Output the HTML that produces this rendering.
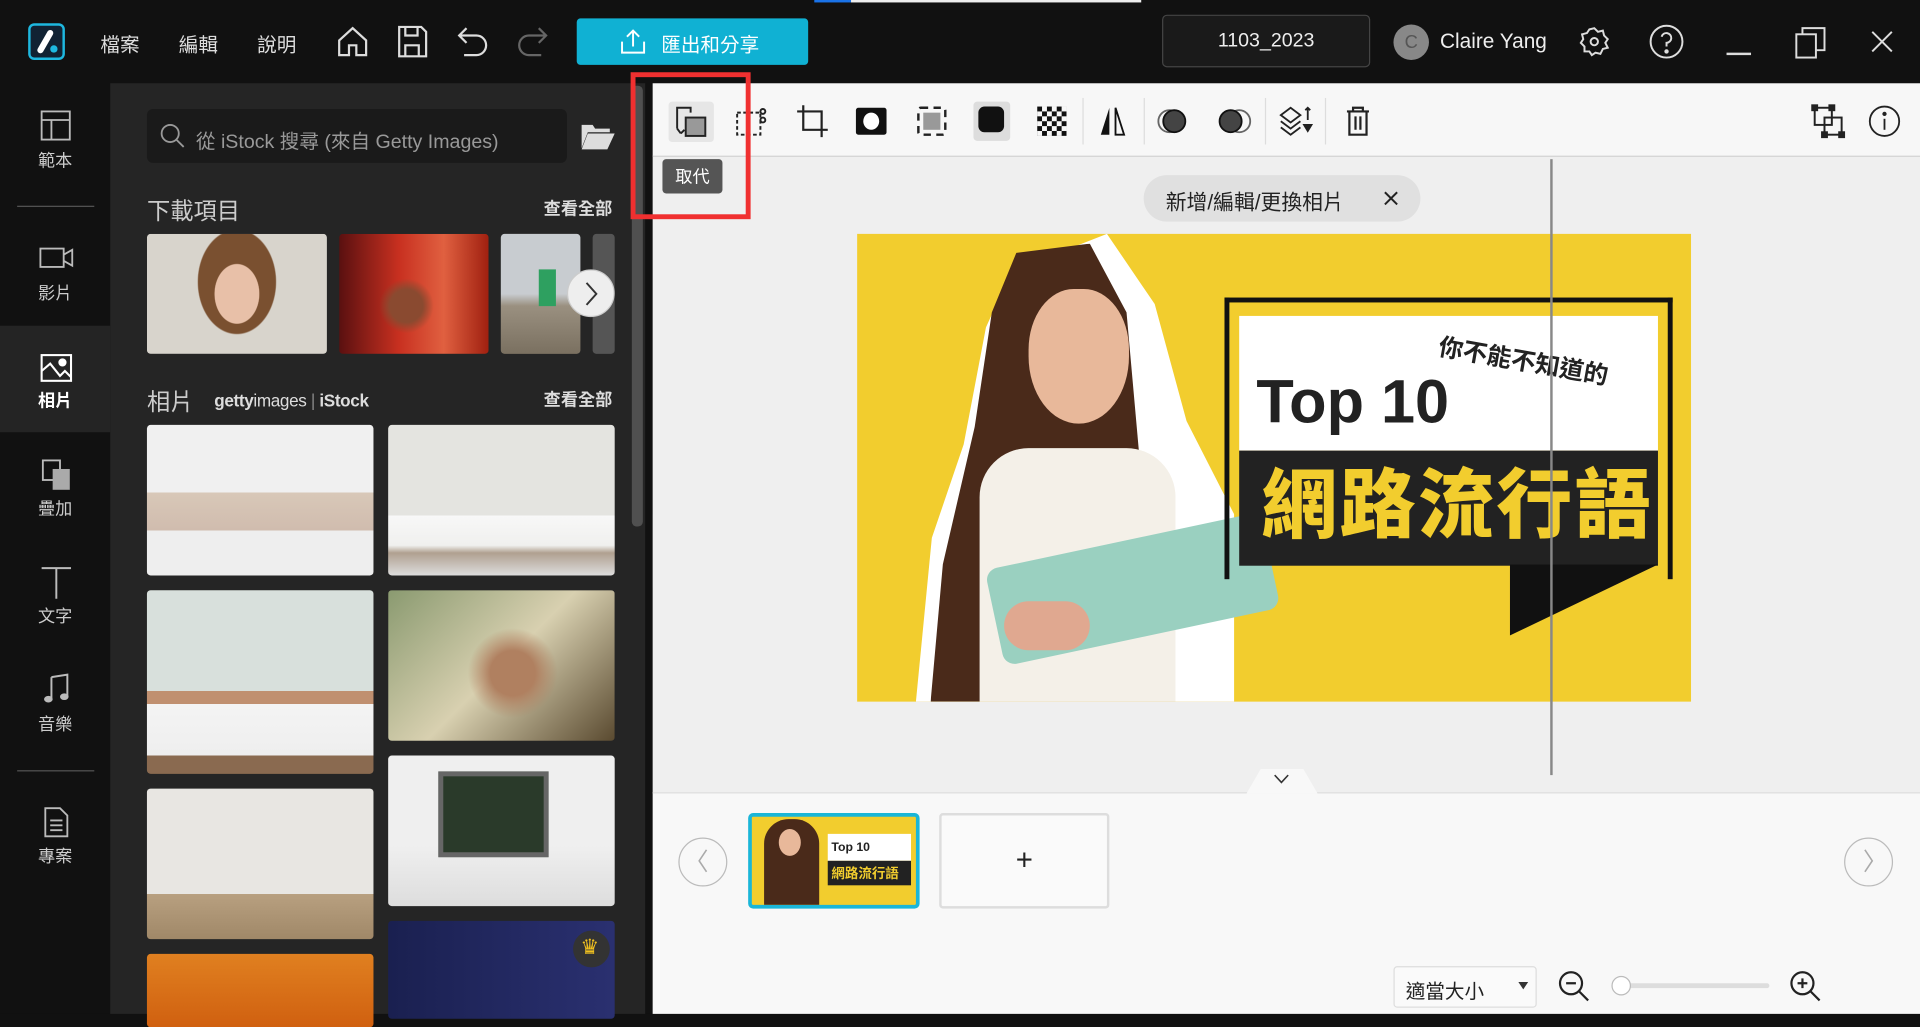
<!DOCTYPE html>
<html><head><meta charset="utf-8"><style>
*{margin:0;padding:0;box-sizing:border-box}
html,body{width:1920px;height:1014px;overflow:hidden;background:#111}
#w{position:absolute;left:0;top:0;width:1568px;height:828px;transform:scale(1.22449);transform-origin:0 0;font-family:"Liberation Sans","Noto Sans CJK TC",sans-serif;background:#111}
.a{position:absolute}
.t{color:#ddd;font-size:16px}
svg{position:absolute;overflow:visible}
.ph{position:absolute;border-radius:3px;overflow:hidden}
.nav{position:absolute;left:0;width:90px;text-align:center;color:#ccc;font-size:14px}
</style></head><body><div id="w">
<!-- top bar -->
<div class="a" style="left:665px;top:0;width:30px;height:2px;background:#1a73e8"></div>
<div class="a" style="left:695px;top:0;width:237px;height:2px;background:#eee"></div>
<div class="a" style="left:23px;top:19px;width:30px;height:30px;border:2px solid #1eb8e0;border-radius:5px;background:#123"></div>
<svg style="left:23px;top:19px" width="30" height="30"><path d="M10 22 L18 8" stroke="#fff" stroke-width="5" stroke-linecap="round"/><circle cx="21" cy="21" r="3" fill="#1eb8e0"/></svg>
<div class="a t" style="left:82px;top:23px">檔案</div>
<div class="a t" style="left:146px;top:23px">編輯</div>
<div class="a t" style="left:210px;top:23px">說明</div>
<svg style="left:275px;top:21px" width="26" height="26" fill="none" stroke="#ddd" stroke-width="1.8"><path d="M2 12 L13 2 L24 12 V24 H16 V16 H10 V24 H2 Z"/></svg>
<svg style="left:325px;top:21px" width="24" height="26" fill="none" stroke="#ddd" stroke-width="1.8"><path d="M1 1 H19 L23 5 V25 H1 Z M6 1 V8 H16 V1 M6 25 V16 H17 V25"/></svg>
<svg style="left:373px;top:22px" width="26" height="24" fill="none" stroke="#ddd" stroke-width="1.8"><path d="M8 1 L2 7 L8 13 M2 7 H16 A8 8 0 0 1 16 23 H6"/></svg>
<svg style="left:422px;top:22px" width="26" height="24" fill="none" stroke="#666" stroke-width="1.8"><path d="M18 1 L24 7 L18 13 M24 7 H10 A8 8 0 0 0 10 23 H20"/></svg>
<div class="a" style="left:471px;top:15px;width:189px;height:38px;background:#10b1d3;border-radius:3px"></div>
<svg style="left:507px;top:24px" width="20" height="20" fill="none" stroke="#fff" stroke-width="1.6"><path d="M10 14 V1 M5 6 L10 1 L15 6 M1 10 V19 H19 V10"/></svg>
<div class="a" style="left:540px;top:23px;color:#fff;font-size:16px">匯出和分享</div>
<div class="a" style="left:949px;top:12px;width:170px;height:43px;background:#1a1a1a;border:1px solid #444;border-radius:4px;color:#eee;font-size:16px;text-align:center;line-height:41px">1103_2023</div>
<div class="a" style="left:1138px;top:20px;width:29px;height:29px;border-radius:50%;background:#888;color:#555;text-align:center;line-height:29px;font-size:15px">C</div>
<div class="a t" style="left:1176px;top:24px;color:#eee;font-size:17px">Claire Yang</div>
<svg style="left:1290px;top:22px" width="24" height="24" fill="none" stroke="#ddd" stroke-width="1.6"><path d="M12 1 L15 4 L19 3 L20 7 L23 10 L21 13 L23 17 L19 18 L17 22 L13 21 L10 23 L8 20 L4 20 L4 16 L1 13 L3 10 L2 6 L6 5 L8 2 Z"/><circle cx="12" cy="12" r="3"/></svg>
<svg style="left:1347px;top:20px" width="28" height="28" fill="none" stroke="#ddd" stroke-width="1.6"><circle cx="14" cy="14" r="13"/><path d="M10 10 A4 4 0 1 1 14 15 V18"/><circle cx="14" cy="22" r="1" fill="#ddd"/></svg>
<div class="a" style="left:1410px;top:43px;width:20px;height:2px;background:#ddd"></div>
<svg style="left:1466px;top:22px" width="26" height="26" fill="none" stroke="#ddd" stroke-width="1.6"><rect x="1" y="6" width="16" height="19"/><path d="M6 6 V1 H24 V19 H17"/></svg>
<svg style="left:1528px;top:25px" width="18" height="18" stroke="#ddd" stroke-width="1.6"><path d="M1 1 L17 17 M17 1 L1 17"/></svg>

<!-- left rail -->
<div class="a" style="left:0;top:68px;width:90px;height:760px;background:#111"></div>
<div class="a" style="left:0;top:266px;width:90px;height:87px;background:#242424"></div>
<div class="a" style="left:14px;top:168px;width:63px;height:1px;background:#555"></div>
<div class="a" style="left:14px;top:629px;width:63px;height:1px;background:#555"></div>
<svg style="left:33px;top:90px" width="25" height="25" fill="none" stroke="#bbb" stroke-width="1.5"><rect x="1" y="1" width="23" height="23"/><path d="M1 8 H24 M9 8 V24"/></svg>
<div class="nav" style="top:121px">範本</div>
<svg style="left:32px;top:202px" width="28" height="18" fill="none" stroke="#bbb" stroke-width="1.5"><rect x="1" y="1" width="19" height="15"/><path d="M20 6 L27 2 V15 L20 11"/></svg>
<div class="nav" style="top:229px">影片</div>
<svg style="left:33px;top:289px" width="26" height="23" fill="none" stroke="#fff" stroke-width="1.7"><rect x="1" y="1" width="24" height="21"/><path d="M1 14 L8 8 L16 18 L20 14 L25 19"/><circle cx="18" cy="7" r="2.5" fill="#fff"/></svg>
<div class="nav" style="top:317px;color:#fff;font-weight:bold">相片</div>
<svg style="left:34px;top:375px" width="24" height="26"><rect x="1" y="1" width="14" height="16" fill="none" stroke="#bbb" stroke-width="1.5"/><rect x="9" y="8" width="14" height="17" fill="#aaa"/></svg>
<div class="nav" style="top:405px">疊加</div>
<svg style="left:33px;top:462px" width="26" height="28" stroke="#bbb" stroke-width="1.6"><path d="M1 2 H25 M13 2 V27"/></svg>
<div class="nav" style="top:493px">文字</div>
<svg style="left:35px;top:550px" width="22" height="26" fill="#bbb"><path d="M7 3 L20 1 V19" stroke="#bbb" stroke-width="1.6" fill="none"/><path d="M7 3 V21" stroke="#bbb" stroke-width="1.6"/><ellipse cx="4.5" cy="21" rx="3.5" ry="2.7"/><ellipse cx="17.5" cy="19" rx="3.5" ry="2.7"/></svg>
<div class="nav" style="top:581px">音樂</div>
<svg style="left:36px;top:659px" width="20" height="25" fill="none" stroke="#bbb" stroke-width="1.5"><path d="M1 1 H13 L19 7 V24 H1 Z M5 11 H15 M5 15 H15 M5 19 H15"/></svg>
<div class="nav" style="top:689px">專案</div>

<!-- panel -->
<div class="a" style="left:90px;top:68px;width:437px;height:760px;background:#252525"></div>
<div class="a" style="left:120px;top:89px;width:343px;height:44px;background:#1a1a1a;border-radius:5px"></div>
<svg style="left:131px;top:101px" width="20" height="20" fill="none" stroke="#999" stroke-width="1.5"><circle cx="8" cy="8" r="7"/><path d="M13 13 L19 19"/></svg>
<div class="a" style="left:160px;top:102px;color:#999;font-size:16px">從 iStock 搜尋 (來自 Getty Images)</div>
<svg style="left:474px;top:99px" width="28" height="24"><path d="M1 3 H10 L12 6 H24 V9 H6 L1 22 Z" fill="#ddd"/><path d="M6 10 H28 L22 23 H1 Z" fill="#ddd"/></svg>
<div class="a" style="left:120px;top:158px;color:#ccc;font-size:19px">下載項目</div>
<div class="a" style="left:444px;top:160px;color:#ddd;font-size:14px;font-weight:bold">查看全部</div>
<div class="ph" style="left:120px;top:191px;width:147px;height:98px;background:radial-gradient(ellipse 30px 40px at 50% 50%,#e8c0a8 60%,transparent 62%),radial-gradient(ellipse 45px 60px at 50% 40%,#7a5030 70%,transparent 72%),#d8d4cc"></div>
<div class="ph" style="left:277px;top:191px;width:122px;height:98px;background:radial-gradient(circle at 45% 60%,#8a4a30 15%,transparent 25%),linear-gradient(90deg,#5a1010,#c83020 40%,#e06040 70%,#a02010)"></div>
<div class="ph" style="left:409px;top:191px;width:65px;height:98px;background:linear-gradient(#c8ccd0 50%,#9a9080 60%,#7a7060);"></div>
<div class="a" style="left:440px;top:220px;width:14px;height:30px;background:#2ea060"></div>
<div class="ph" style="left:484px;top:191px;width:18px;height:98px;background:#555"></div>
<div class="a" style="left:463px;top:220px;width:39px;height:39px;border-radius:50%;background:#eee;border:1px solid #ccc"></div>
<svg style="left:477px;top:230px" width="12" height="20" fill="none" stroke="#333" stroke-width="1.6"><path d="M2 1 L10 10 L2 19"/></svg>
<div class="a" style="left:120px;top:314px;color:#ccc;font-size:19px">相片</div>
<div class="a" style="left:175px;top:319px;color:#ddd;font-size:14px;font-weight:bold;letter-spacing:-0.3px">getty<span style="font-weight:normal">images</span> <span style="color:#888;font-weight:normal">|</span> iStock</div>
<div class="a" style="left:444px;top:316px;color:#ddd;font-size:14px;font-weight:bold">查看全部</div>
<div class="ph" style="left:120px;top:347px;width:185px;height:123px;background:linear-gradient(#f0f0f0 45%,#d8c8b8 45%,#d0bcae 70%,#eee 70%)"></div>
<div class="ph" style="left:317px;top:347px;width:185px;height:123px;background:linear-gradient(#e4e4e0 60%,#f8f8f8 60%,#f0f0ee 80%,#b0a090 85%,#ddd)"></div>
<div class="ph" style="left:120px;top:482px;width:185px;height:150px;background:linear-gradient(#d8e0dc 55%,#c09070 55%,#c09070 62%,#f4f4f4 62%,#eee 90%,#8a6a50 90%)"></div>
<div class="ph" style="left:317px;top:482px;width:185px;height:123px;background:radial-gradient(circle at 55% 55%,#b08060 15%,transparent 30%),linear-gradient(135deg,#8a9a70,#d8d0b0 50%,#5a4a30)"></div>
<div class="ph" style="left:120px;top:644px;width:185px;height:123px;background:linear-gradient(#e8e6e2 70%,#b8a080 70%,#a08868)"></div>
<div class="ph" style="left:317px;top:617px;width:185px;height:123px;background:linear-gradient(#efefef 60%,#ddd)"></div>
<div class="a" style="left:358px;top:630px;width:90px;height:70px;background:#2a3a2a;border:4px solid #666"></div>
<div class="ph" style="left:120px;top:779px;width:185px;height:60px;background:linear-gradient(#e08020,#d06010)"></div>
<div class="ph" style="left:317px;top:752px;width:185px;height:80px;background:linear-gradient(90deg,#1a2050,#2a3070)"></div>
<div class="a" style="left:468px;top:760px;width:30px;height:30px;border-radius:50%;background:#333"></div>
<div class="a" style="left:474px;top:764px;color:#f0c020;font-size:17px">♛</div>
<div class="a" style="left:516px;top:70px;width:9px;height:360px;background:#505050;border-radius:4px"></div>
<div class="a" style="left:527px;top:68px;width:6px;height:760px;background:#111"></div>
<div class="a" style="left:533px;top:420px;width:20px;height:60px;background:#2a2a2a;clip-path:polygon(0 0,100% 15%,100% 85%,0 100%)"></div>
<svg style="left:539px;top:443px" width="8" height="14" fill="none" stroke="#ccc" stroke-width="1.5"><path d="M7 1 L1 7 L7 13"/></svg>

<!-- main -->
<div class="a" style="left:533px;top:68px;width:1035px;height:60px;background:#f7f7f7;border-bottom:1px solid #ddd"></div>
<div class="a" style="left:533px;top:128px;width:1035px;height:520px;background:#efefef"></div>
<div class="a" style="left:533px;top:647px;width:1035px;height:181px;background:#f8f8f8;border-top:1px solid #ddd"></div>
<!-- toolbar icons -->
<div class="a" style="left:546px;top:83px;width:37px;height:33px;background:#e6e6e6;border-radius:3px"></div>
<svg style="left:552px;top:87px" width="26" height="26" fill="none" stroke="#222" stroke-width="1.6"><path d="M1 18 V1 H12 V5"/><rect x="8" y="9" width="16" height="15" fill="#999"/><path d="M4 22 L1 18 M4 22 L7 19"/></svg>
<svg style="left:601px;top:87px" width="26" height="24" fill="none" stroke="#222" stroke-width="1.6" stroke-dasharray="3 2"><rect x="1" y="5" width="19" height="18"/><circle cx="22" cy="4" r="2" stroke-dasharray="none"/><circle cx="22" cy="11" r="2" stroke-dasharray="none"/></svg>
<svg style="left:650px;top:85px" width="26" height="28" fill="none" stroke="#222" stroke-width="1.8"><path d="M6 1 V21 H26 M1 6 H21 V27"/></svg>
<div class="a" style="left:699px;top:88px;width:25px;height:22px;background:#111;border-radius:2px"></div>
<div class="a" style="left:705px;top:92px;width:13px;height:14px;background:#fff;border-radius:50%"></div>
<div class="a" style="left:749px;top:87px;width:24px;height:24px;border:2px dashed #222;border-radius:3px"></div>
<div class="a" style="left:754px;top:92px;width:14px;height:14px;background:#999"></div>
<div class="a" style="left:795px;top:83px;width:30px;height:32px;background:#ddd;border-radius:3px"></div>
<div class="a" style="left:799px;top:87px;width:21px;height:21px;background:#111;border-radius:5px"></div>
<svg style="left:847px;top:87px" width="24" height="24"><defs><pattern id="ck" width="8" height="8" patternUnits="userSpaceOnUse"><rect width="4" height="4" fill="#111"/><rect x="4" y="4" width="4" height="4" fill="#111"/></pattern></defs><rect width="24" height="24" fill="url(#ck)"/></svg>
<div class="a" style="left:884px;top:80px;width:1px;height:38px;background:#ddd"></div>
<svg style="left:896px;top:87px" width="26" height="24"><path d="M10 1 L10 23 H3 Z" fill="#111"/><path d="M15 1 L22 23 H15 Z" fill="none" stroke="#111" stroke-width="1.5"/></svg>
<div class="a" style="left:934px;top:80px;width:1px;height:38px;background:#ddd"></div>
<svg style="left:946px;top:88px" width="28" height="22" fill="none" stroke="#666" stroke-width="1.5"><circle cx="9" cy="11" r="9"/><circle cx="13" cy="11" r="9" fill="#444" stroke="#111"/></svg>
<svg style="left:994px;top:88px" width="28" height="22" fill="none" stroke="#666" stroke-width="1.5"><circle cx="18" cy="11" r="9"/><circle cx="11" cy="11" r="9" fill="#444" stroke="#111"/></svg>
<div class="a" style="left:1033px;top:80px;width:1px;height:38px;background:#ddd"></div>
<svg style="left:1045px;top:86px" width="28" height="26" fill="none" stroke="#222" stroke-width="1.5"><path d="M1 8 L9 2 L17 8 L9 14 Z M1 13 L9 19 L17 13 M1 18 L9 24 L17 18 M23 2 V12 M21 4 L23 2 L25 4"/><path d="M20 16 H26 L23 21 Z" fill="#222"/></svg>
<div class="a" style="left:1082px;top:80px;width:1px;height:38px;background:#ddd"></div>
<svg style="left:1099px;top:86px" width="20" height="26" fill="none" stroke="#222" stroke-width="1.8"><path d="M1 5 H19 M6 5 V2 H14 V5 M3 5 V24 H17 V5 M8 9 V20 M12 9 V20"/></svg>
<svg style="left:1479px;top:85px" width="28" height="28" fill="none" stroke="#222" stroke-width="1.6"><rect x="3" y="3" width="14" height="14"/><rect x="11" y="11" width="14" height="14"/><rect x="1" y="1" width="4" height="4" fill="#222"/><rect x="15" y="1" width="4" height="4" fill="#222"/><rect x="23" y="23" width="4" height="4" fill="#222"/><rect x="9" y="23" width="4" height="4" fill="#222"/></svg>
<svg style="left:1526px;top:86px" width="26" height="26" fill="none" stroke="#222" stroke-width="1.5"><circle cx="13" cy="13" r="12"/><path d="M13 11 V20"/><circle cx="13" cy="7" r="1" fill="#222"/></svg>

<!-- pill -->
<div class="a" style="left:934px;top:143px;width:226px;height:38px;background:#e0e0e0;border-radius:19px"></div>
<div class="a" style="left:952px;top:151px;color:#222;font-size:17px">新增/編輯/更換相片</div>
<svg style="left:1130px;top:156px" width="12" height="12" stroke="#222" stroke-width="1.6"><path d="M1 1 L11 11 M11 1 L1 11"/></svg>

<!-- canvas image -->
<div class="a" style="left:700px;top:191px;width:681px;height:382px;background:#f2cd2e;overflow:hidden">
 <div class="a" style="left:48px;top:0;width:260px;height:382px;background:#fff;clip-path:polygon(30% 8%,60% 0,75% 15%,85% 40%,100% 60%,100% 100%,0 100%,5% 65%,15% 45%,22% 20%)"></div>
 <div class="a" style="left:60px;top:8px;width:200px;height:374px;background:#4a2a1a;clip-path:polygon(35% 2%,65% 0,80% 15%,85% 45%,95% 80%,100% 100%,0 100%,5% 70%,18% 40%,25% 15%)"></div>
 <div class="a" style="left:140px;top:45px;width:82px;height:110px;background:#e8b89a;border-radius:45% 45% 50% 50%"></div>
 <div class="a" style="left:100px;top:175px;width:160px;height:207px;background:#f4f0e8;border-radius:40px 40px 0 0"></div>
 <div class="a" style="left:110px;top:250px;width:230px;height:80px;background:#9ad0c0;transform:rotate(-12deg);border-radius:10px"></div>
 <div class="a" style="left:120px;top:300px;width:70px;height:40px;background:#e0a890;border-radius:20px"></div>
 <div class="a" style="left:300px;top:52px;width:366px;height:4px;background:#111"></div>
 <div class="a" style="left:300px;top:52px;width:4px;height:230px;background:#111"></div>
 <div class="a" style="left:662px;top:52px;width:4px;height:230px;background:#111"></div>
 <div class="a" style="left:312px;top:67px;width:342px;height:110px;background:#fff"></div>
 <div class="a" style="left:312px;top:177px;width:342px;height:94px;background:#222"></div>
 <div class="a" style="left:533px;top:270px;width:121px;height:58px;background:#111;clip-path:polygon(0 0,100% 0,0 100%)"></div>
 <div class="a" style="left:326px;top:108px;color:#222;font-size:50px;font-weight:bold;font-family:'Liberation Sans',sans-serif">Top 10</div>
 <div class="a" style="left:478px;top:76px;color:#222;font-size:20px;font-weight:bold;transform:rotate(10deg);transform-origin:0 0">你不能不知道的</div>
 <div class="a" style="left:330px;top:188px;color:#f2cd2e;font-size:62px;font-weight:900;letter-spacing:2px;line-height:70px">網路流行語</div>
</div>
<div class="a" style="left:1266px;top:130px;width:2px;height:503px;background:#888"></div>
<div class="a" style="left:1018px;top:628px;width:58px;height:20px;background:#f8f8f8;clip-path:polygon(20% 0,80% 0,100% 100%,0 100%)"></div>
<svg style="left:1040px;top:632px" width="13" height="8" fill="none" stroke="#333" stroke-width="1.3"><path d="M1 1 L6.5 7 L12 1"/></svg>

<!-- timeline -->
<div class="a" style="left:554px;top:684px;width:40px;height:40px;border-radius:50%;border:1px solid #bbb"></div>
<svg style="left:569px;top:693px" width="10" height="20" fill="none" stroke="#aaa" stroke-width="1.3"><path d="M8 1 L2 10 L8 19"/></svg>
<div class="a" style="left:1506px;top:684px;width:40px;height:40px;border-radius:50%;border:1px solid #bbb"></div>
<svg style="left:1521px;top:693px" width="10" height="20" fill="none" stroke="#aaa" stroke-width="1.3"><path d="M2 1 L8 10 L2 19"/></svg>
<div class="a" style="left:611px;top:664px;width:140px;height:78px;border:3px solid #1ab6d8;border-radius:4px;background:#f2cd2e;overflow:hidden">
 <div class="a" style="left:10px;top:2px;width:45px;height:70px;background:#4a2a1a;border-radius:20px 20px 0 0"></div>
 <div class="a" style="left:22px;top:10px;width:18px;height:22px;background:#e8b89a;border-radius:50%"></div>
 <div class="a" style="left:62px;top:14px;width:68px;height:22px;background:#fff"></div>
 <div class="a" style="left:62px;top:36px;width:68px;height:20px;background:#222"></div>
 <div class="a" style="left:65px;top:20px;font-size:10px;font-weight:bold;color:#222">Top 10</div>
 <div class="a" style="left:65px;top:38px;font-size:11px;font-weight:bold;color:#f2cd2e">網路流行語</div>
</div>
<div class="a" style="left:767px;top:664px;width:139px;height:78px;border:2px solid #ddd;border-radius:3px;background:#fafafa;text-align:center;line-height:74px;font-size:24px;color:#222">+</div>
<div class="a" style="left:1138px;top:789px;width:117px;height:34px;border:1px solid #ddd;background:#fafafa;border-radius:3px"></div>
<div class="a" style="left:1148px;top:796px;font-size:16px;color:#222">適當大小</div>
<svg style="left:1240px;top:802px" width="8" height="6"><path d="M0 0 H8 L4 6 Z" fill="#333"/></svg>
<svg style="left:1272px;top:792px" width="28" height="28" fill="none" stroke="#222" stroke-width="1.8"><circle cx="11" cy="11" r="9"/><path d="M7 11 H15 M17 17 L25 25"/></svg>
<div class="a" style="left:1330px;top:803px;width:115px;height:4px;background:#ddd;border-radius:2px"></div>
<div class="a" style="left:1316px;top:797px;width:16px;height:16px;border-radius:50%;background:#fff;border:1px solid #bbb"></div>
<svg style="left:1461px;top:792px" width="28" height="28" fill="none" stroke="#222" stroke-width="1.8"><circle cx="11" cy="11" r="9"/><path d="M7 11 H15 M11 7 V15 M17 17 L25 25"/></svg>

<!-- tooltip & red box -->
<div class="a" style="left:541px;top:130px;width:49px;height:28px;background:#555;border-radius:3px;color:#fff;font-size:14px;text-align:center;line-height:28px">取代</div>
<div class="a" style="left:515px;top:59px;width:98px;height:120px;border:4px solid #f03030"></div>
</div></body></html>
